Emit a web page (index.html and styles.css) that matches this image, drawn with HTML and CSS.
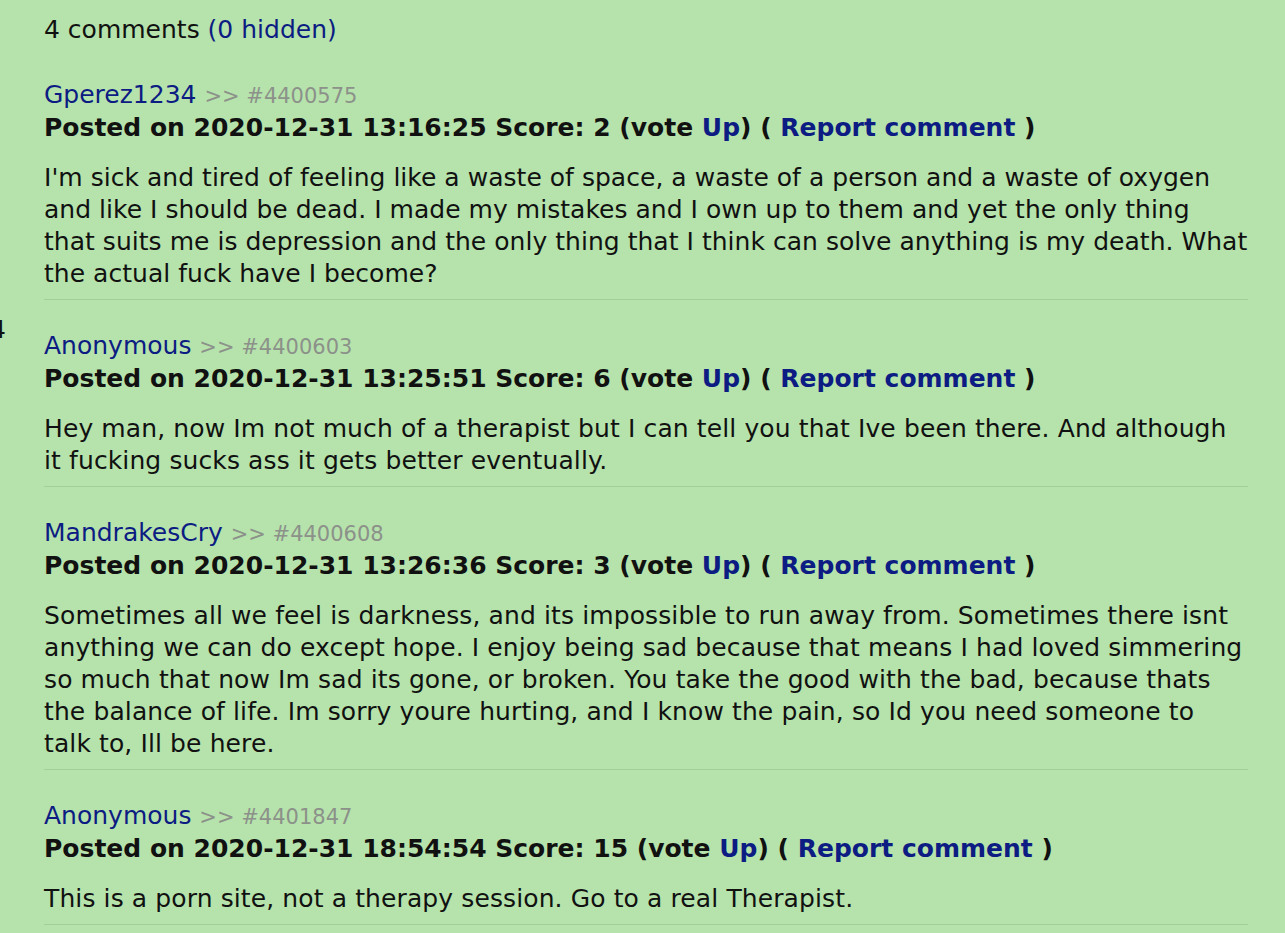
FILE: index.html
```html
<!DOCTYPE html>
<html>
<head>
<meta charset="utf-8">
<link rel="stylesheet" href="styles.css">
</head>
<body>
<div class="page">
  <div class="stray">4</div>
  <div class="count">4 comments <a class="link">(0 hidden)</a></div>

  <div class="comment">
    <div class="meta"><a class="link">Gperez1234</a> <span class="ref">&gt;&gt; #4400575</span></div>
    <div class="posted">Posted on 2020-12-31 13:16:25 Score: 2 (vote <a class="link">Up</a>) ( <a class="link">Report comment</a> )</div>
    <p class="text text-snug">I'm sick and tired of feeling like a waste of space, a waste of a person and a waste of oxygen and like I should be dead. I made my mistakes and I own up to them and yet the only thing that suits me is depression and the only thing that I think can solve anything is my death. What the actual fuck have I become?</p>
  </div>

  <div class="comment">
    <div class="meta"><a class="link">Anonymous</a> <span class="ref">&gt;&gt; #4400603</span></div>
    <div class="posted">Posted on 2020-12-31 13:25:51 Score: 6 (vote <a class="link">Up</a>) ( <a class="link">Report comment</a> )</div>
    <p class="text">Hey man, now Im not much of a therapist but I can tell you that Ive been there. And although it fucking sucks ass it gets better eventually.</p>
  </div>

  <div class="comment">
    <div class="meta"><a class="link">MandrakesCry</a> <span class="ref">&gt;&gt; #4400608</span></div>
    <div class="posted">Posted on 2020-12-31 13:26:36 Score: 3 (vote <a class="link">Up</a>) ( <a class="link">Report comment</a> )</div>
    <p class="text">Sometimes all we feel is darkness, and its impossible to run away from. Sometimes there isnt anything we can do except hope. I enjoy being sad because that means I had loved simmering so much that now Im sad its gone, or broken. You take the good with the bad, because thats the balance of life. Im sorry youre hurting, and I know the pain, so Id you need someone to talk to, Ill be here.</p>
  </div>

  <div class="comment">
    <div class="meta"><a class="link">Anonymous</a> <span class="ref">&gt;&gt; #4401847</span></div>
    <div class="posted">Posted on 2020-12-31 18:54:54 Score: 15 (vote <a class="link">Up</a>) ( <a class="link">Report comment</a> )</div>
    <p class="text">This is a porn site, not a therapy session. Go to a real Therapist.</p>
  </div>
</div>
</body>
</html>
```
FILE: styles.css
```css
html, body {
  margin: 0;
  padding: 0;
  background: #b6e3ac;
}
body {
  font-family: "DejaVu Sans", Verdana, sans-serif;
  font-size: 25px;
  line-height: 32px;
  color: #111;
}
.page {
  position: relative;
  padding: 14px 37px 0 44px;
}
.stray {
  position: absolute;
  left: -10px;
  top: 314px;
  color: #111;
}
.link {
  color: #0c1c82;
  text-decoration: none;
}
.count {
  margin-bottom: 33px;
}
.comment {
  border-bottom: 1px solid #a2cf98;
  padding-bottom: 9px;
  margin-bottom: 30px;
}
.ref {
  color: #8c918a;
  font-size: 21px;
}
.posted {
  font-weight: bold;
}
.text {
  margin: 18px 0 0 0;
  letter-spacing: 0.11px;
}
.text-snug {
  letter-spacing: 0.03px;
}
```
